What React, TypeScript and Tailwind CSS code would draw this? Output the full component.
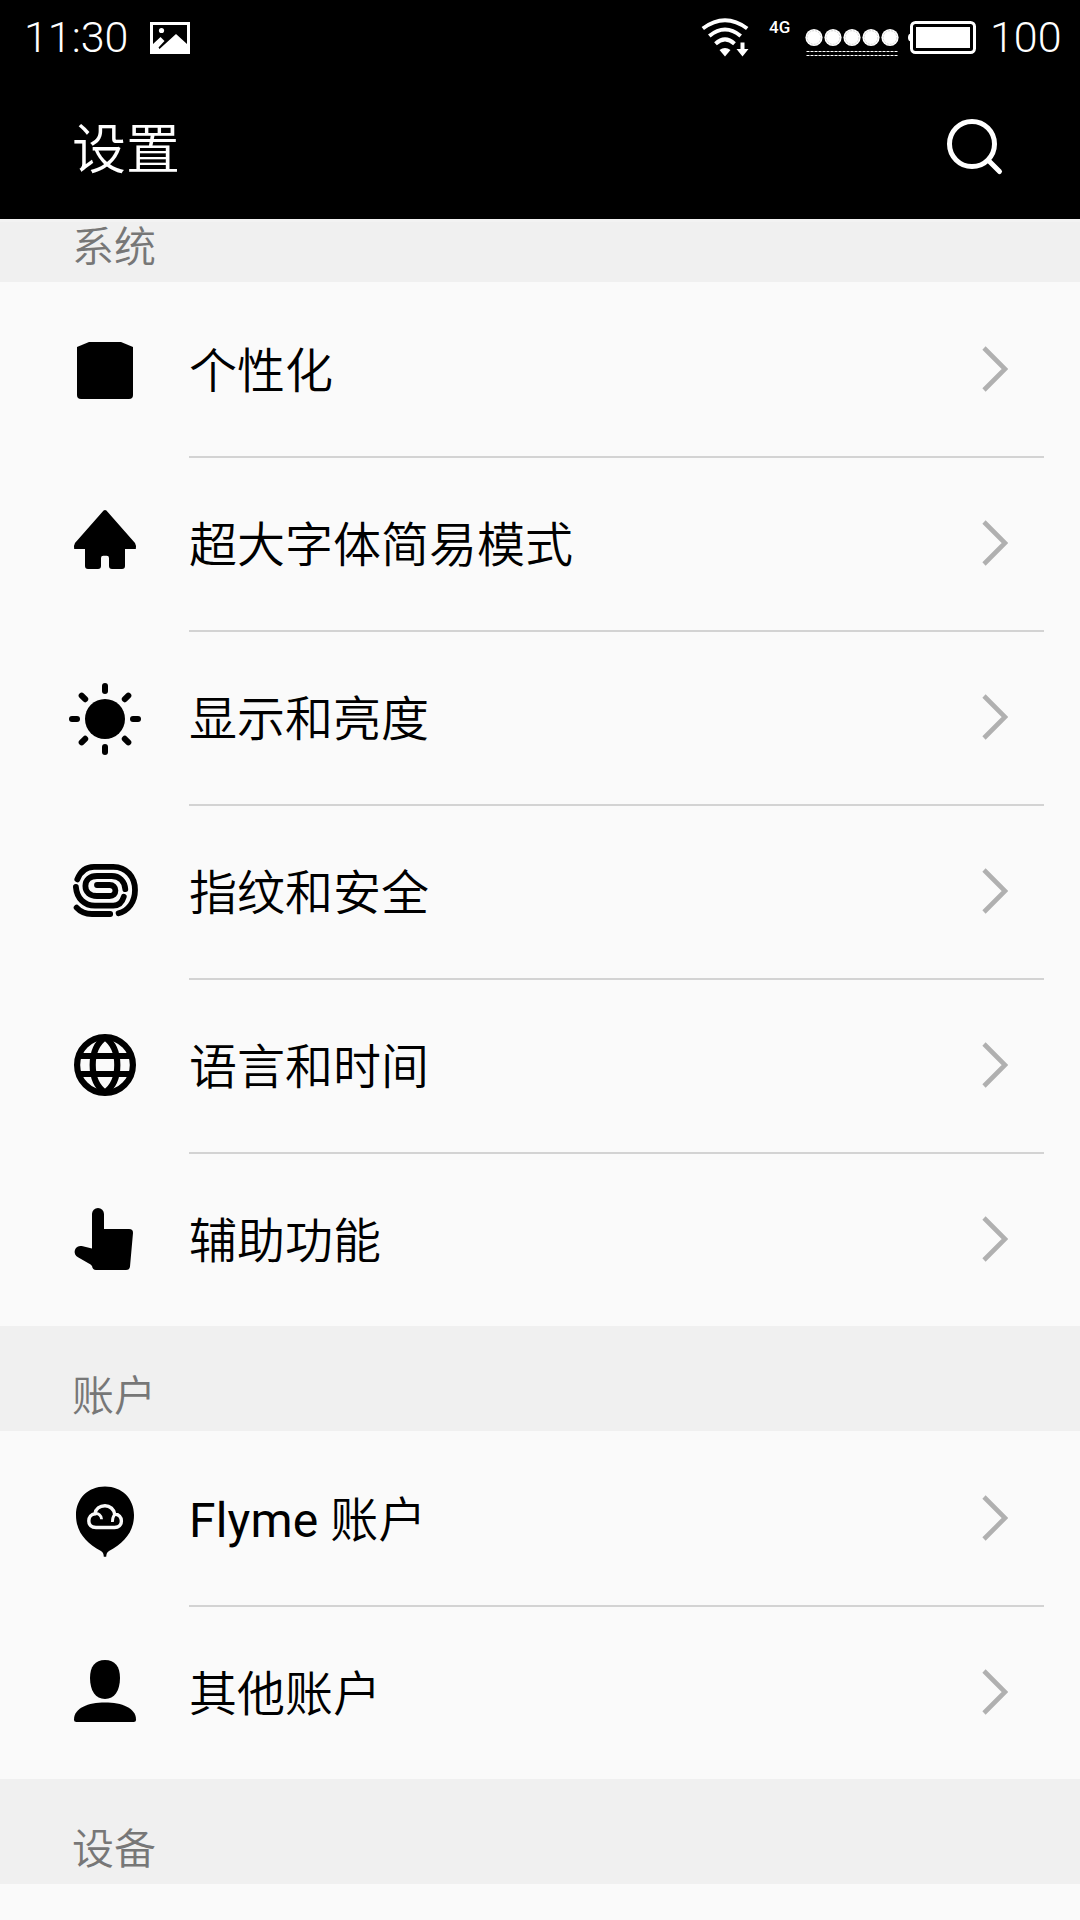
import type { ReactNode } from 'react'

function ThemeIcon() {
  return <path d="M20 9H52L64 14V62Q64 66 60 66H12Q8 66 8 62V14Z" />
}

function HomeIcon() {
  return (
    <path d="M34.6 3.6Q36 2.4 37.4 3.6L66 36Q67.5 38.5 66.8 42H56V59Q56 62 53 62H43Q40 62 40 59V51Q40 48.7 37.7 48.7H34.3Q32 48.7 32 51V59Q32 62 29 62H19Q16 62 16 59V42H5.2Q4.5 38.5 6 36Z" />
  )
}

const RAYS = [0, 45, 90, 135, 180, 225, 270, 315]

function BrightnessIcon() {
  return (
    <>
      <circle cx="36" cy="38" r="20" />
      {RAYS.map((deg) => (
        <path
          key={deg}
          d="M36 5V10"
          transform={`rotate(${deg} 36 38)`}
          stroke="black"
          strokeWidth="6"
          strokeLinecap="round"
        />
      ))}
    </>
  )
}

function FingerprintIcon() {
  return (
    <g fill="none" stroke="black" strokeWidth="5.8" strokeLinecap="round">
      <path d="M8.3 24.4C11.5 16 17.5 11.8 25 11.8H44.3C57.5 11.8 66 22 66 35C66 47 59.5 55.5 49.6 58.3" />
      <path d="M6.9 32C7.8 43.5 15.5 50.7 26 50.7H44.3C49.8 50.7 53.2 47.4 54.8 41.8" />
      <path d="M7.6 52.6C11.5 57 16.5 59 23 59H41.2" />
      <path d="M56.3 34.2C55.6 26 50.3 21 42.7 21H28C20.8 21 16.4 25 16.4 31C16.4 37 20.8 41 28 41H40.5C44.5 41 46.4 38.6 46.4 35.5C46.4 32.4 44.3 30 40.5 30H28" />
    </g>
  )
}

function GlobeIcon() {
  return (
    <g fill="none" stroke="black" strokeWidth="6.2">
      <circle cx="36" cy="36" r="27.9" />
      <path d="M9 27H63M9 45H63" />
      <path
        d="M36 8.5C28 14 23.7 24 23.7 36S28 58 36 63.5C44 58 48.3 48 48.3 36S44 14 36 8.5Z"
        strokeLinejoin="round"
      />
    </g>
  )
}

function HandIcon() {
  return (
    <path d="M23 11A6 6 0 0 1 35 11V26H60Q64.2 26 64 30L61 63.5Q60.6 67 57 67H27Q23.6 67 23 63L21.6 61.4L9 54.2A5.9 5.9 0 0 1 12.8 43.1L23 45.4Z" />
  )
}

function FlymeIcon() {
  return (
    <>
      <path d="M36 4.6C53 4.6 65 16.8 65 33C65 50 55 61 40 69Q37.4 70.4 37.2 74.7H34.8Q34.6 70.4 32 69C17 61 7 50 7 33C7 16.8 19 4.6 36 4.6Z" />
      <g fill="none" stroke="#fafafa" strokeWidth="3.4">
        <path d="M27 45.5C22.5 45.5 19.8 42.8 19.8 39C19.8 35.3 22.2 32.2 26 31.8C26.6 26.8 30.8 23.7 36 23.7C41 23.7 45 27.4 45.6 32C49.8 32.4 52.4 35.2 52.4 39C52.4 42.8 49.6 45.5 45.5 45.5Z" />
        <path d="M26 31.8C29.6 31.2 32.4 33.4 32.6 37.3M46 32C44.2 34.2 43.2 36.2 43.4 40" strokeWidth="2.8" />
      </g>
    </>
  )
}

function UserIcon() {
  return (
    <>
      <path d="M36 4C46 4 51 10.5 51 22C51 34.5 45.5 43 36 43S21 34.5 21 22C21 10.5 26 4 36 4Z" />
      <path d="M36 46.6C53 46.6 66.8 52 67 63.5Q67 66 64.5 66H7.5Q5 66 5 63.5C5.2 52 19 46.6 36 46.6Z" />
    </>
  )
}

function StatusBar() {
  return (
    <div className="flex h-[75px] items-center pl-6 pr-[19px] font-[Roboto,sans-serif] text-[43px] font-light leading-none">
      <span className="w-[105px]">11:30</span>
      <svg className="ml-[21px] h-8 w-10" viewBox="0 0 40 32">
        <path fill="white" fillRule="evenodd" d="M0 0H40V32H0ZM3 3V22L10.5 15L14.5 19L8.5 25.5L9.5 27L26 12L37 22V3Z" />
        <circle cx="11.5" cy="8.5" r="2.6" fill="white" />
      </svg>
      <div className="grow" />
      <svg className="h-10 w-12 overflow-visible" viewBox="0 0 48 40">
        <g fill="none" stroke="white" strokeWidth="4">
          <path d="M-.2 10.5Q22-6 44.2 10.5" />
          <path d="M6.3 18Q22 5 37.7 18" />
          <path d="M12.5 25.7Q22 17 31.5 25.7" />
        </g>
        <path d="M16.5 32Q22 28 27.5 32L22 38.5Z" fill="white" />
        <path d="M37.5 24.5H41.5V31H45.5L39.5 38.5L33.5 31H37.5Z" fill="white" />
      </svg>
      <span className="mb-[20px] ml-[18px] w-[22px] text-[17px] font-medium">4G</span>
      <svg className="ml-[14px] mt-[8px] h-[28px] w-[94px]" viewBox="0 0 94 28">
        {[9, 28, 47, 66, 85].map((cx) => (
          <g key={cx}>
            <circle cx={cx} cy="9.5" r="8.6" fill="white" />
            <circle cx={cx} cy="9.5" r="6.8" fill="none" stroke="#c8c8c8" strokeWidth="0.8" strokeDasharray="2 1" />
          </g>
        ))}
        <path d="M1.5 23.5H93M1.5 27.5H93" stroke="white" strokeWidth="1" strokeDasharray="3 1" />
      </svg>
      <svg className="ml-[9px] h-[33px] w-[68px]" viewBox="0 0 68 33">
        <path d="M2.5 12.5Q0 13 0 16.5T2.5 20.5Z" fill="white" />
        <rect x="3.5" y="1.5" width="63" height="30" rx="4" fill="none" stroke="white" strokeWidth="3" />
        <rect x="8" y="6" width="54" height="21" fill="white" />
      </svg>
      <span className="ml-[14px] w-[71px]">100</span>
    </div>
  )
}

function SectionTitle({ children }: { children: ReactNode }) {
  return (
    <div className="flex h-[105px] items-end bg-[#f0f0f0] pb-1 pl-[72px] text-[42px] leading-[60px] text-[#777]">
      {children}
    </div>
  )
}

type Item = { label: ReactNode; icon: ReactNode }

function ItemList({ items }: { items: Item[] }) {
  return (
    <ul>
      {items.map((item, i) => (
        <li key={i} className="flex h-[174px] pl-[69px] pr-9">
          <svg className="mt-[51px] h-[72px] w-[72px] shrink-0 overflow-visible" viewBox="0 0 72 72">
            {item.icon}
          </svg>
          <div
            className={`ml-12 flex grow items-center justify-between border-t-2 pr-[36px] ${
              i > 0 ? 'border-[#d3d3d3]' : 'border-transparent'
            }`}
          >
            <span className="pt-1 text-[48px] leading-[72px]">{item.label}</span>
            <svg className="h-12 w-[28px]" viewBox="0 0 28 48">
              <path d="M4 2L25 23L4 44" fill="none" stroke="#b0b0b0" strokeWidth="4.6" />
            </svg>
          </div>
        </li>
      ))}
    </ul>
  )
}

const SYSTEM_ITEMS: Item[] = [
  { label: '个性化', icon: <ThemeIcon /> },
  { label: '超大字体简易模式', icon: <HomeIcon /> },
  { label: '显示和亮度', icon: <BrightnessIcon /> },
  { label: '指纹和安全', icon: <FingerprintIcon /> },
  { label: '语言和时间', icon: <GlobeIcon /> },
  { label: '辅助功能', icon: <HandIcon /> },
]

const ACCOUNT_ITEMS: Item[] = [
  { label: <><span className="font-normal tracking-[0.2px]">Flyme</span> 账户</>, icon: <FlymeIcon /> },
  { label: '其他账户', icon: <UserIcon /> },
]

export default function App() {
  return (
    <div className="h-[1920px] w-[1080px] overflow-hidden bg-[#fafafa] font-[Roboto,'Noto_Sans_CJK_SC',sans-serif] font-[350] text-black">
      <header className="h-[219px] bg-black text-white">
        <StatusBar />
        <div className="flex h-36 items-center justify-between pl-[72px] pr-[75px]">
          <h1 className="pt-[8px] text-[54px] leading-[80px]">设置</h1>
          <svg className="h-[60px] w-[60px]" viewBox="0 0 60 60">
            <g fill="none" stroke="white" strokeWidth="5" strokeLinecap="round">
              <circle cx="27" cy="27" r="22.5" />
              <path d="M43.5 43.5L54.5 54.5" />
            </g>
          </svg>
        </div>
      </header>
      <main>
        {/* first section is scrolled partly under the header */}
        <div className="flex h-[63px] items-end border-t-[3px] border-[#f3f3f3] bg-[#f0f0f0] pb-1 pl-[72px] text-[42px] leading-[60px] text-[#777]">
          系统
        </div>
        <ItemList items={SYSTEM_ITEMS} />
        <SectionTitle>账户</SectionTitle>
        <ItemList items={ACCOUNT_ITEMS} />
        <SectionTitle>设备</SectionTitle>
      </main>
    </div>
  )
}
